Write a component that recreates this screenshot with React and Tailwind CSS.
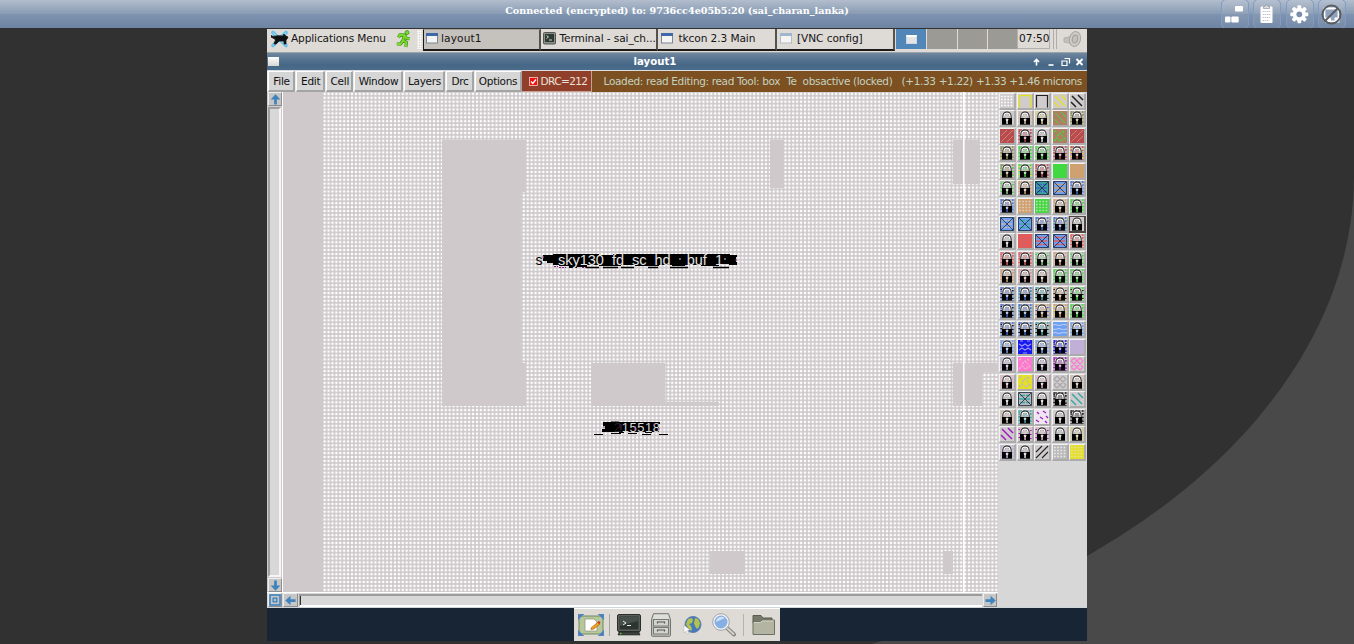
import React from "react";

const sans = "font-['DejaVu_Sans',sans-serif]";

/* ---------- VNC header icons ---------- */
function HeaderButton({ children }) {
  return (
    <div className="-mt-[1px] flex h-[30px] w-[28px] items-center justify-center rounded-[5px] border border-[#7f9bc6] bg-white/5">
      <svg viewBox="0 0 28 28" className="h-[28px] w-[28px] shrink-0">{children}</svg>
    </div>
  );
}

function Header() {
  return (
    <div className="relative flex h-[28px] w-full items-start justify-center bg-[linear-gradient(to_bottom,#b2bdcd_0%,#899cb3_49%,#7e93af_51%,#6e84a3_100%)]">
      <div className="mt-[4px] whitespace-nowrap font-['DejaVu_Serif',serif] text-[9.62px] font-bold leading-[14px] text-white">
        Connected (encrypted) to: 9736cc4e05b5:20 (sai_charan_lanka)
      </div>
      <div className="absolute right-[8px] top-0 flex h-[28px] gap-[4.5px] overflow-hidden">
        <HeaderButton>
          <g fill="#fff">
            <rect x="14" y="6" width="8" height="5.5" rx="1" />
            <rect x="4" y="16.500" width="5.500" height="6" rx="1" />
            <rect x="10.300" y="16.500" width="7.400" height="6" rx="1" />
          </g>
        </HeaderButton>
        <HeaderButton>
          <rect x="7.500" y="6.500" width="12" height="16.500" rx="1" fill="#fff" />
          <path d="M10.500 8.500v-2H12a1.500 1.500 0 0 1 3 0h1.500v2z" fill="#ddd" stroke="#8795a8" strokeWidth=".7" />
          <path d="M9.500 11.500h8M9.500 14.500h8M9.500 17.500h8M9.500 20.500h6" stroke="#c3c7cd" strokeWidth="1" strokeDasharray="1.6 .6" />
        </HeaderButton>
        <HeaderButton>
          <g transform="translate(13.3 14.3)" fill="#fff">
            {[0, 45, 90, 135].map((a) => (
              <rect key={a} x="-1.9" y="-9" width="3.8" height="18" rx="1" transform={`rotate(${a})`} />
            ))}
            <circle r="6.5" />
            <circle r="2.9" fill="#7b8fac" />
          </g>
        </HeaderButton>
        <HeaderButton>
          <path d="M6.500 8.500h14v10h-3v1.500h3v1.500H8V20h4v-1.500H6.500z" fill="#8fa2bd" stroke="#fff" strokeWidth="1.800" />
          <circle cx="13.500" cy="14.500" r="9" fill="none" stroke="#595d63" strokeWidth="2" />
          <path d="M20 8l-13 13" stroke="#595d63" strokeWidth="2" />
        </HeaderButton>
      </div>
    </div>
  );
}

/* ---------- Desktop panel ---------- */
function WinIcon({ pale }) {
  return (
    <svg viewBox="0 0 12 11" className="h-[11px] w-[12px] shrink-0">
      <rect x=".5" y=".5" width="11" height="9.5" fill="#f4f4f2" stroke={pale ? "#b5bcc4" : "#7a8698"} />
      <rect x="0" y="0" width="12" height="3" fill={pale ? "#9fb6cc" : "#3e68a8"} />
    </svg>
  );
}

function Task({ className, icon, children }) {
  return (
    <div className={`flex h-[22px] items-center border-b-2 border-r-2 border-b-[#1c1a18] border-r-[#55524e] pb-[2px] ${className}`}>
      {icon}
      <span className="whitespace-nowrap">{children}</span>
    </div>
  );
}

function Panel() {
  return (
    <div className={`flex h-[23px] w-full items-start bg-[#dedad6] text-[10.6px] leading-[17px] text-[#151515] ${sans}`}>
      <div className="flex h-[20px] w-[156px] shrink-0 items-center">
        <svg viewBox="0 0 18 18" className="ml-[4px] h-[18px] w-[18px]">
          <path d="M2 2.5l13 13M15 2.5l-13 13" stroke="#65bfe9" strokeWidth="3.6" strokeLinecap="round" />
          <path d="M2 2.5l13 13M15 2.5l-13 13" stroke="#b4e4f8" strokeWidth="1" />
          <path d="M0 5.500c2 1 3 1 5 .5 3-.5 5 0 7 0l1-2 1 1.500 3 1.500-1 2-1 1v4h-2v-3h-5l-3 3H3l1.500-4L3 8.500 0 7z" fill="#111" stroke="#111" strokeWidth=".8" />
        </svg>
        <span className="ml-[2px] w-[96px] whitespace-nowrap pb-px tracking-[-0.14px]">Applications Menu</span>
        <svg viewBox="0 0 18 18" className="ml-[8px] h-[18px] w-[18px]">
          <circle cx="12" cy="2.600" r="2" fill="#7bdc2c" stroke="#3f8e12" strokeWidth=".8" />
          <path d="M3.500 7.500L5 4.800l4.500.300 1.800 3.200 3.200.4M9.500 5.500L8 10.500 5.500 14H1.800M8 10.500l3.500 2L10.800 17" fill="none" stroke="#3f8e12" strokeWidth="3.200" strokeLinejoin="round" />
          <path d="M3.500 7.500L5 4.800l4.500.300 1.800 3.200 3.200.4M9.500 5.500L8 10.500 5.500 14H1.800M8 10.500l3.500 2L10.800 17" fill="none" stroke="#7bdc2c" strokeWidth="1.900" strokeLinejoin="round" />
        </svg>
        <div className="ml-[4px] h-[19px] w-[5px] bg-[radial-gradient(circle,#fff_0.8px,transparent_1px)] bg-[size:2.5px_2.5px]" />
      </div>
      <Task className="w-[118px] gap-[3px] border-l border-t border-l-[#1c1a18] border-t-[#a5a29c] bg-[#c5c1bc] pl-[2px] tracking-[0.12px]" icon={<WinIcon />}>layout1</Task>
      <Task
        className="w-[117px] gap-[3.500px] bg-[#dedad6] pl-[2px] tracking-[-0.1px]"
        icon={
          <svg viewBox="0 0 13 13" className="h-[13px] w-[13px] shrink-0">
            <rect x=".5" y=".5" width="12" height="11.500" rx="1" fill="#8b8f88" stroke="#555" />
            <rect x="2" y="2" width="9" height="8" fill="#2e3a34" />
            <path d="M3.500 3.500l2 1.500-2 1.500M6 8h3" stroke="#dfe8df" fill="none" strokeWidth=".9" />
          </svg>
        }
      >
        Terminal - sai_ch...
      </Task>
      <Task className="w-[119px] gap-[5.500px] bg-[#dedad6] pl-[3px] tracking-[-0.1px]" icon={<WinIcon />}>tkcon 2.3 Main</Task>
      <Task className="w-[118px] gap-[5px] bg-[#dedad6] pl-[3px] tracking-[-0.08px]" icon={<WinIcon pale />}>[VNC config]</Task>
      <div className="flex h-[20px] w-[122px] shrink-0 gap-px bg-[#dedad6] pl-[1px]">
        <div className="flex w-[30px] items-center justify-center bg-[#5086b8]">
          <div className="h-[9px] w-[11px] border border-t-2 border-[#c9d7e6] border-t-white bg-[#e4e4e2]" />
        </div>
        <div className="w-[30px] bg-[#9c9a95]" />
        <div className="w-[29px] bg-[#9c9a95]" />
        <div className="w-[29px] bg-[#9c9a95]" />
      </div>
      <div className="h-[20px] w-[33px] shrink-0 whitespace-nowrap border border-[#b3afa9] border-t-[#c8c5c0] pl-[1px]">07:50</div>
      <div className="ml-[3px] h-[20px] w-[4px] shrink-0 border-x border-[#b0ada8]" />
      <svg viewBox="0 0 20 18" className="ml-[6px] mt-px h-[18px] w-[20px] shrink-0">
        <path d="M1 8l5-1 5-5v14l-5-3-5-1z" fill="#c3c0bb" stroke="#b3b0ab" />
        <ellipse cx="12" cy="9" rx="5.500" ry="7.500" fill="#cfccc7" stroke="#a9a6a1" transform="rotate(12 12 9)" />
        <ellipse cx="12" cy="9" rx="2.700" ry="4" fill="#c3c0bb" stroke="#a3a09b" transform="rotate(12 12 9)" />
      </svg>
    </div>
  );
}

/* ---------- Magic window ---------- */
function TitleBar() {
  return (
    <div className={`flex h-[18px] w-full items-center border-t border-[#9aa4ad] bg-[linear-gradient(to_bottom,#71879f_0%,#587592_35%,#466786_70%,#4b6b8a_100%)] text-white ${sans}`}>
      <div className="ml-[1px] h-[9px] w-[11px] bg-[linear-gradient(to_bottom,#fff,#d5d5d0)]" />
      <div className="flex-1 text-center text-[10.200px] font-bold leading-[17px]">layout1</div>
      <svg viewBox="0 0 56 12" className="h-[12px] w-[56px]" fill="none" stroke="#fff" strokeWidth="1.600">
        <path d="M5.500 9.500V4M3 6l2.500-2.500L8 6" />
        <path d="M17.500 9h5" />
        <path d="M33.500 2.500h5v5M31 5h5v4.500h-5z" strokeWidth="1.200" />
        <path d="M45.500 3l6 6M51.500 3l-6 6" strokeWidth="1.900" />
      </svg>
    </div>
  );
}

const MENUS = [
  ["File", "w-[27px]"],
  ["Edit", "w-[29.3px]"],
  ["Cell", "w-[27px]"],
  ["Window", "w-[48.3px]"],
  ["Layers", "w-[41.7px]"],
  ["Drc", "w-[27.3px]"],
  ["Options", "w-[47px]"],
];

function MenuBar() {
  return (
    <div className={`flex h-[22px] w-full items-stretch border-t border-[#d9dde2] bg-[#ececec] text-[10.500px] leading-[18px] text-[#111] ${sans}`}>
      <div className="w-[1px] shrink-0" />
      {MENUS.map(([label, w]) => (
        <div key={label} className={`${w} mr-px flex shrink-0 items-center justify-center border border-b-2 border-r-2 border-b-[#a4a4a4] border-l-white border-r-[#a4a4a4] border-t-white bg-[#d6d6d6]`}>
          <span className="pl-px tracking-[-0.3px]">{label}</span>
        </div>
      ))}
      <div className="-ml-px flex w-[70px] shrink-0 items-center border-b border-r border-[#c8a090] bg-[#90402a] pl-[7px] text-[#ece0da]">
        <svg viewBox="0 0 9 9" className="mr-[3px] h-[9px] w-[9px] shrink-0">
          <rect x=".5" y=".5" width="8" height="8" fill="#f01010" stroke="#f7cfc5" strokeWidth=".8" />
          <path d="M2 4.500l1.800 2L7 2.500" fill="none" stroke="#fff" strokeWidth="1.300" />
        </svg>
        <span className="whitespace-nowrap tracking-[-0.600px]">DRC=212</span>
      </div>
      <div className="flex flex-1 items-center justify-end whitespace-pre bg-[#7c5020] pb-px pr-[5px] text-[#c3d2c0]">
        <span className="tracking-[-0.340px]">{"Loaded: read Editing: read Tool: box  Te  obsactive (locked)   (+1.33 +1.22) +1.33 +1.46 microns"}</span>
      </div>
    </div>
  );
}

const BTN = "flex items-center justify-center border border-b-[#8d8d8d] border-l-[#ededed] border-r-[#8d8d8d] border-t-[#ededed] bg-[#c6c6c6]";

function Arrow({ className }) {
  return (
    <svg viewBox="0 0 12 12" className={`h-[11px] w-[11px] shrink-0 ${className}`}>
      <path d="M6 .3l5.300 5.700H7.500v5.500h-3V6H.7z" fill="#3f83bd" />
    </svg>
  );
}

const BLANKS = [
  [159, 48, 84, 52], [159, 100, 79, 171], [159, 271, 84, 43], [487, 48, 14, 48],
  [670, 48, 27, 44], [670, 271, 45, 9], [670, 280, 29, 34], [308, 271, 74, 43],
  [382, 310, 54, 4], [427, 459, 35, 23], [660, 459, 10, 23],
];

function Layout() {
  return (
    <svg viewBox="0 0 715 500" className="h-[500px] w-[715px] shrink-0">
      <defs>
        <pattern id="mesh" x="39.700" y="-.1" width="3.905" height="3.905" patternUnits="userSpaceOnUse">
          <rect width="3.905" height="3.905" fill="#cdc7ca" />
          <rect x=".8" y=".8" width="2.300" height="2.300" fill="#fff" />
        </pattern>
      </defs>
      <rect width="715" height="500" fill="#cfc9cc" />
      <rect x="40" y="0" width="675" height="500" fill="url(#mesh)" />
      {BLANKS.map(([x, y, w, h]) => (
        <rect key={`${x}-${y}`} x={x} y={y} width={w} height={h} fill="#cfc9cc" />
      ))}
      <rect x="680" width="1.600" height="500" fill="#fff" />
      <g fontFamily="Liberation Sans, sans-serif">
        <path d="M260 163H270V162H316V163H330V162H447V163H454V165H453V170H454V173H446V172H436V174H418V173H402V174H389V173H376V174H352V173H338V174H316V173H304V175H294V176H286V174H276V173H270V171H264V169H260Z" fill="#000" />
        <path d="M271 174.500h4M276 175.500h7M299 175.500h4M452 168h3M259 165h2" stroke="#8e168e" strokeWidth="1" strokeDasharray="2 1" />
        <text x="252.500" y="173" fill="#000" fontSize="14">s</text>
        <text x="258.500" y="173" fill="#b5b2b4" fontSize="12">'</text>
        <text x="275" y="172.500" fill="#e6e3e5" fontSize="14" textLength="165" lengthAdjust="spacingAndGlyphs">sky130_fd_sc_hd__buf_1</text>
        <path d="M396 167h2M441 167h2" stroke="#ccc" strokeWidth="1" />
        <path d="M303 175.500h13M320 175.500h15M338 175.500h13M365 175.500h10M387 175.500h18M430 175.500h16" stroke="#000" strokeWidth="1.400" />
        <path d="M320 330H328V329.500H336V330H377V332H376V340H369V341H362V340H341V341H336V340H319V337H322V334H320Z" fill="#000" />
        <text x="331" y="340" fill="#d9d9d9" fontSize="13" textLength="46" lengthAdjust="spacing"><tspan fill="#222">2</tspan><tspan>15518</tspan></text>
        <path d="M311 342.500h9M328 341.500h10M345 341.500h9M359 342.500h9M376 342.500h9" stroke="#000" strokeWidth="1.200" />
        <path d="M320 335h2M338 332v6M352 334v5M371 331v3M374 337h3" stroke="#8b278b" strokeWidth="1" strokeOpacity=".7" />
      </g>
    </svg>
  );
}

/* ---------- Layer palette ---------- */
const C = {
  gy: "#b9b9b9", tn: "#cfa070", pt: "#d7bda8", gn: "#42d842", pg: "#8cc98c", bg: "#8f8a50", rd: "#e05c5c",
  dr: "#b94a50", pr: "#d69a9a", bl: "#6f9ff0", db: "#3f68c8", sb: "#1818f0", bt: "#3fa0a0", yl: "#e6df2a",
  py: "#d8d28a", lv: "#c0b0d8", pk: "#ff78d0", pp: "#e5b6c8", pu: "#a01cc0", te: "#3aa8a4", bk: "#222222", wh: "#ffffff",
};

/* kind:colour[:second colour] */
const ROWS = [
  "dots:wh box:yl corner:bk back:yl back:bk",
  "lock:gy lock:pt lock:py mixb:bg:gn lock:bg",
  "mixf:dr:tn lock:dr lock:gy mixx:bg:gn mixf:dr:tn",
  "lock:bg lock:gn lock:gn lock:dr lock:dr:yl",
  "lock:bg:gn lock:gn:yl lock:dr solid:gn solid:tn",
  "lock:pg:gn lock:tn cross:bt:db cross:bl:tn lock:db:bl",
  "lock:db:bl dots:tn:tn dots:gn:gn lock:tn lock:gn",
  "cross:bl:gy cross:bl:te lock:db:bl lock:db:te sel:gy",
  "lock:gy solid:rd cross:bl:rd cross:bl:rd lock:rd",
  "lock:rd lock:rd lock:pg:gn lock:tn:pt lock:pg:gn",
  "lock:tn lock:pr lock:pt lock:gn lock:gn:pg",
  "lock:db:bk lock:db:te lock:te:bk lock:tn:bk lock:gn:bk",
  "lock:db:bk lock:db:te lock:tn:db lock:tn:yl lock:gn",
  "lock:db:bk lock:db:bk lock:te:bk wave:bl lock:bl",
  "lock:bl weave:sb lock:bl lock:sb solid:lv",
  "lock:lv mixx:pk:pp lock:lv lock:pu hatch:pk",
  "lock:pp mixx:yl:gy lock:pp hatch:gy lock:pt",
  "lock:gy cross:gy:te lock:gy lock:bk back:te",
  "lock:pt lock:te flec:pu lock:gy lock:bk",
  "back:pu lock:pp:pu lock:pp:pu lock:gy lock:py",
  "lock:lv lock:gy forw:bk dots:wh:gy dots:yl:yl",
];

const BACK = "M2 2L12 12M8 1L13 6M1 8L6 13";
const FORW = "M1 13L13 1M1 7L7 1M7 13L13 7";

function Cell({ code }) {
  const [kind, a, b] = code.split(":");
  const ca = C[a];
  const cb = C[b] || ca;
  const lock = kind === "lock" || kind === "sel";
  return (
    <div className={`flex h-[17px] w-[17px] border-b-2 border-l border-r-2 border-t ${kind === "sel" ? "border-[#4d4643]" : "border-b-[#ababab] border-l-[#f2f2f2] border-r-[#ababab] border-t-[#f2f2f2]"} bg-[#d0cbcd]`}>
      <svg viewBox="0 0 14 14" className="h-[14px] w-[14px] shrink-0">
        {kind === "solid" && <rect width="14" height="14" fill={ca} />}
        {kind === "box" && <path d="M1.500 13.500V1.500h11v12" fill="none" stroke={ca} strokeWidth="1.500" />}
        {kind === "corner" && <path d="M1.500 13.500V1.500h11v12" fill="none" stroke={ca} strokeWidth="1.200" />}
        {kind === "dots" && (
          <>
            {b && <rect width="14" height="14" fill={cb} />}
            <path d="M1 2.500h12M1 5.500h12M1 8.500h12M1 11.500h12" stroke={b && a !== "wh" ? "#ece4d6" : ca} strokeWidth="1.300" strokeDasharray="1.700 1.500" opacity={b ? 0.7 : 1} />
          </>
        )}
        {kind === "back" && <path d={BACK} stroke={ca} strokeWidth="1.500" />}
        {kind === "forw" && <path d={FORW} stroke={ca} strokeWidth="1.100" />}
        {kind === "mixb" && <><rect width="14" height="14" fill="#ae7f60" /><path d={BACK} stroke={cb} strokeWidth="1" /></>}
        {kind === "mixf" && <><rect width="14" height="14" fill={ca} /><path d={FORW} stroke={cb} strokeWidth=".7" /></>}
        {kind === "mixx" && (
          <>
            <rect width="14" height="14" fill={a === "bg" ? "#ae7f60" : ca} />
            <path d="M1 3l3-2M4 7l3-3 3 3M1 12l3-3 3 3M8 12l3-3 2 2M9 2l3 2" fill="none" stroke={cb} strokeWidth="1.300" strokeDasharray="2.500 1" />
          </>
        )}
        {kind === "weave" && (
          <>
            <rect width="14" height="14" fill={ca} />
            <path d="M1 4l3 2 3-2 3 2 3-2M2 1h3M9 1h3M1 10l3-2 3 2 3-2 3 2M5 13h4" fill="none" stroke="#9a9af5" strokeWidth="1.200" />
          </>
        )}
        {kind === "cross" && (
          <>
            <rect width="14" height="14" fill={ca} />
            <path d="M2 3.500h10M1 7h12M2 10.500h10" stroke={cb} strokeWidth="1.600" strokeDasharray="5 1" />
            <path d="M.5 .5h13v13H.5zM1 1l12 12M13 1L1 13" fill="none" stroke="#17233c" strokeWidth=".9" strokeOpacity=".85" />
          </>
        )}
        {kind === "hatch" && <path d="M1 4L4 1M1 10L10 1M4 13L13 4M10 13l3-3M1 4L10 13M4 1L13 10M10 1l3 3M1 10l3 3" stroke={a === "gy" ? "#a9a6a8" : ca} strokeWidth="1.200" />}
        {kind === "wave" && <><rect width="14" height="14" fill={ca} /><path d="M0 3q2-1 4 0t4 0 6 0M0 7q2 1 4 0t4 0 6 0M0 11q2-1 4 0t4 0 6 0" stroke="#bdd3f7" fill="none" /></>}
        {kind === "flec" && <><rect width="14" height="14" fill="#eee6f0" /><path d="M2 2l2 2M8 1l3 2M5 7l3 2M11 6l2 2M1 10l3 2M10 11l2 2" stroke={ca} strokeWidth="1.300" /></>}
        {lock && (
          <>
            {kind !== "sel" && a !== "gy" && (
              <>
                <path d="M1.200 0v14M12.800 0v14M2 1h10" stroke={ca} strokeWidth="1.600" strokeDasharray="2 1.200" opacity=".8" />
                <path d="M1.200 2v11M12.800 3v10" stroke={cb} strokeWidth="1.600" strokeDasharray="1 3" />
              </>
            )}
            <path d="M3.600 8V5a3.400 3.400 0 0 1 6.800 0v3" fill={ca} fillOpacity=".35" stroke="#111" strokeWidth="2.300" />
            <path d="M4 7.500V5.200a3 3 0 0 1 6 0v2.300" fill="none" stroke="#fff" strokeWidth="1.300" />
            <rect x="2" y="7" width="10" height="6.700" fill="#000" />
            <path d="M5.700 8.300h2.700l-.6 1.900v2.800H6.300v-2.800z" fill={a === "bk" || a === "gy" ? "#e6e6e6" : ca} />
            <circle cx="7.050" cy="8.800" r="1.300" fill="#f1ecec" opacity=".8" />
          </>
        )}
      </svg>
    </div>
  );
}

function Palette() {
  return (
    <div className="w-[89px] shrink-0 self-stretch bg-[#d7d7d7] pl-[1px]">
      <div className="grid grid-cols-[repeat(5,17.6px)] grid-rows-[repeat(21,17.58px)] pt-[0.5px]">
        {ROWS.flatMap((r, i) => r.split(" ").map((c, j) => <Cell key={`${i}-${j}`} code={c} />))}
      </div>
    </div>
  );
}

function Workspace() {
  return (
    <div className="flex h-[516px] w-full border-b border-[#cfd6da] bg-[#d7d7d7]">
      <div className="flex w-[731px] flex-col">
        <div className="flex h-[500px]">
          <div className="flex w-[16px] flex-col border-r border-white bg-[#d0cacd] pl-[1px]">
            <div className={`${BTN} h-[14px] w-[14px]`}><Arrow /></div>
            <div className="my-[1px] w-[13px] flex-1 border-2 border-b-[#f6f6f6] border-l-[#a0a0a0] border-r-[#f6f6f6] border-t-[#a0a0a0] bg-[#d8d8d8]" />
            <div className={`${BTN} h-[14px] w-[14px]`}><Arrow className="rotate-180" /></div>
          </div>
          <Layout />
        </div>
        <div className="flex h-[15px] items-center border-t border-white pl-[1px]">
          <div className={`${BTN} h-[14px] w-[14px]`}>
            <svg viewBox="0 0 12 12" className="h-[12px] w-[12px] shrink-0" fill="none" stroke="#3f83bd">
              <rect x="1" y="1" width="10" height="10" strokeWidth="1.600" />
              <rect x="4.200" y="4.200" width="3.600" height="3.600" strokeWidth="1.400" />
            </svg>
          </div>
          <div className={`${BTN} ml-[1px] h-[14px] w-[15px]`}><Arrow className="-rotate-90" /></div>
          <div className="ml-px flex h-[13px] flex-1 items-center border-b-2 border-l border-t-2 border-b-white border-l-[#999] border-t-[#9c9c9c] bg-[#d8d8d8]">
            <div className="h-[9px] w-px bg-[#333]" />
          </div>
          <div className={`${BTN} mx-[1px] h-[14px] w-[14px]`}><Arrow className="rotate-90" /></div>
        </div>
      </div>
      <Palette />
    </div>
  );
}

/* ---------- Dock ---------- */
function Dock() {
  return (
    <div className="flex h-[33px] w-full justify-center bg-[#182534]">
      <div className="flex h-[33px] w-[206px] items-center border-t border-white bg-[#dedad6] pl-[4px]">
        <svg viewBox="0 0 26 22" className="h-[22px] w-[26px]">
          <rect x="1" y="2" width="24" height="18" rx="1" fill="#b6c79a" stroke="#6f8a62" />
          <path d="M0 0h6L0 6zM26 0h-6l6 6zM0 22h6l-6-6zM26 22h-6l6-6z" fill="#4f7fb8" stroke="#5f8cc0" strokeWidth=".7" />
          <path d="M7 5h9l3 3v9H7z" fill="#fff" stroke="#8a8f80" strokeWidth=".7" />
          <path d="M13 14l7-6 2 2-6 5-3 .500z" fill="#f0a020" stroke="#a85810" strokeWidth=".6" />
          <circle cx="21" cy="8.500" r="1.300" fill="#d03a20" />
        </svg>
        <div className="ml-[5px] h-[22px] w-px bg-[#aaa69f]" />
        <svg viewBox="0 0 24 22" className="ml-[7px] h-[22px] w-[24px]">
          <rect x=".5" y=".5" width="23" height="17" rx="1.500" fill="#5a5f59" stroke="#2b2d2a" />
          <rect x="2.500" y="2.500" width="19" height="13" fill="#2d3531" />
          <path d="M3 3h18v4L3 12z" fill="#47504b" />
          <path d="M6 7l3 2-3 2M10 11.500h4" stroke="#e8efe8" fill="none" />
          <path d="M2 18h20l1 3H1z" fill="#3c413c" stroke="#232523" strokeWidth=".6" />
          <circle cx="3.800" cy="19.600" r=".8" fill="#6ee020" />
        </svg>
        <svg viewBox="0 0 20 24" className="ml-[10px] h-[24px] w-[20px]">
          <path d="M2.500.7h15l2 6v15.600a1 1 0 0 1-1 1h-17a1 1 0 0 1-1-1V6.700z" fill="#bcbdb8" stroke="#72746f" />
          <path d="M3 1.500h14l1.500 4.500h-17z" fill="#deded9" />
          <rect x="2.500" y="6.500" width="15" height="6.500" fill="#d3d3ce" stroke="#777a74" />
          <rect x="2.500" y="14.500" width="15" height="6.500" fill="#d3d3ce" stroke="#777a74" />
          <path d="M6.500 10.500V9h7v1.500M6.500 18.500V17h7v1.500" fill="none" stroke="#555" strokeWidth="1.200" />
        </svg>
        <svg viewBox="0 0 20 20" className="ml-[11px] h-[20px] w-[20px]">
          <circle cx="11" cy="9.500" r="8" fill="#4477bd" stroke="#5f80ae" />
          <path d="M6 4l4-1 1 2-1 3-3 1 2 2 1 3-1 2-3-3-2-4zM13 3l3 1 2 4-1 4-2 2-2-3-1-3z" fill="#b3c24a" />
          <path d="M2 10l6 5-2.500.5 1.500 3-1.500.700-1.500-3-2 2z" fill="#fff" stroke="#999" strokeWidth=".4" />
        </svg>
        <svg viewBox="0 0 24 24" className="ml-[10px] h-[24px] w-[24px]">
          <path d="M15 15l7 6.500" stroke="#85877f" strokeWidth="4" strokeLinecap="round" />
          <path d="M15 15l6.500 6" stroke="#d1d2cc" strokeWidth="2" strokeLinecap="round" />
          <circle cx="9" cy="9" r="7.500" fill="#86afe4" stroke="#f3f3f3" strokeWidth="2" />
          <circle cx="9" cy="9" r="8.300" fill="none" stroke="#8d9196" strokeWidth=".8" />
          <path d="M4 9a5.500 5.500 0 0 1 9-4z" fill="#cfe0f7" />
        </svg>
        <div className="ml-[7px] h-[22px] w-px bg-[#b5b2ac]" />
        <svg viewBox="0 0 24 22" className="ml-[8px] h-[22px] w-[24px]">
          <path d="M1 3.500V1.500h8l2 2.500h9v5H1z" fill="#77796b" stroke="#595b50" />
          <path d="M1 7.500h7l2-1.500h12.500v14.500H1z" fill="#b3b5a2" stroke="#6e7063" />
          <path d="M2 8.500h6.500l2-1.500h11" stroke="#d0d2c0" fill="none" />
        </svg>
      </div>
    </div>
  );
}

export default function App() {
  return (
    <div className="h-[644px] w-[1354px] overflow-hidden bg-[#494949]">
      <Header />
      <div className="flex h-[658px] w-full justify-center rounded-br-[800px_511px] bg-[#313131] pt-px">
        <div className="flex w-[820px] flex-col">
          <Panel />
          <TitleBar />
          <MenuBar />
          <Workspace />
          <Dock />
        </div>
      </div>
    </div>
  );
}
